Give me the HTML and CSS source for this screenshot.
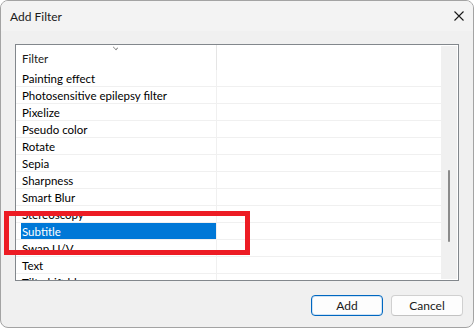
FILE: index.html
```html
<!DOCTYPE html>
<html>
  <head>
    <meta charset="utf-8">
    <title>Add Filter</title>
    <link rel="stylesheet" href="styles.css">
  </head>
  <body>
    <section class="dialog">
      <header class="titlebar">
        <h1>Add Filter</h1>
        <span class="close">
          <svg width="10" height="10" viewBox="0 0 10 10"><path d="M0.5 0.5 L9.5 9.5 M9.5 0.5 L0.5 9.5" stroke="#1a1a1a" stroke-width="1.1" fill="none"/></svg>
        </span>
      </header>
      <div class="content">
        <div class="listbox">
          <div class="list">
            <div class="list-head">
              <div class="col-name">Filter<span class="sort"></span></div>
              <div class="col-rest"></div>
            </div>
            <ul class="rows">
              <li><span class="cell">Painting effect</span></li>
              <li><span class="cell">Photosensitive epilepsy filter</span></li>
              <li><span class="cell">Pixelize</span></li>
              <li><span class="cell">Pseudo color</span></li>
              <li><span class="cell">Rotate</span></li>
              <li><span class="cell">Sepia</span></li>
              <li><span class="cell">Sharpness</span></li>
              <li><span class="cell">Smart Blur</span></li>
              <li><span class="cell">Stereoscopy</span></li>
              <li class="selected"><span class="cell">Subtitle</span></li>
              <li><span class="cell">Swap U/V</span></li>
              <li><span class="cell">Text</span></li>
              <li class="partial"><span class="cell">Tilt-shift blur</span></li>
            </ul>
          </div>
          <div class="scrollbar"><span class="thumb"></span></div>
        </div>
        <div class="buttons">
          <button class="btn default">Add</button>
          <button class="btn">Cancel</button>
        </div>
      </div>
      <!-- highlight drawn over the list -->
      <div class="marker"></div>
    </section>
  </body>
</html>
```

FILE: styles.css
```css
html {
  background: #fff;
  color: #000;
}
html, button {
  font-family: Lato, "Noto Sans", "Liberation Sans", sans-serif;
}
body {
  margin: 0;
}

.dialog {
  position: relative;
  width: 472px;
  height: 326px;
  border: 1px solid #a3a3a3;
  border-radius: 8px;
  background: #f0f0f0;
  display: flex;
  flex-direction: column;
  overflow: hidden;
}

.titlebar {
  height: 30px;
  background: #f3f3f3;
  display: flex;
  align-items: center;
  justify-content: space-between;
  padding: 0 9px 0 9px;
}
.titlebar h1 {
  margin: 0;
  font-size: 12px;
  font-weight: normal;
  color: #1a1a1a;
}
.titlebar .close {
  display: block;
  width: 10px;
  height: 10px;
  margin-top: -1px;
}
.titlebar .close svg {
  display: block;
}

.content {
  padding: 13px 14px 0 14px;
}

.listbox {
  height: 235px;
  border: 1px solid #82878c;
  background: #fff;
  display: flex;
}

.list {
  width: 425px;
  overflow: hidden;
  font-size: 11.5px;
}

.list-head {
  height: 25px;
  display: flex;
}
.list-head .col-name {
  position: relative;
  width: 194px;
  padding-left: 6px;
  line-height: 27px;
  border-right: 1px solid #e5e5e5;
  color: #1a1a1a;
}
/* little sort chevron on top of the header */
.list-head .sort {
  position: absolute;
  left: 97px;
  top: 0;
  width: 4px;
  height: 4px;
  border-right: 1px solid #7a7a7a;
  border-bottom: 1px solid #7a7a7a;
  transform: rotate(45deg) scale(0.9, 0.6);
}

.rows {
  margin: 0;
  padding: 0;
  list-style: none;
}
.rows li {
  height: 16px;
  border-bottom: 1px solid #f0f0f0;
  display: flex;
}
.rows li:after {
  content: "";
  display: block;
  border-left: 1px solid #f0f0f0;
}
.rows .cell {
  display: block;
  width: 194px;
  margin-left: 5px;
  padding-left: 1px;
  line-height: 18px;
  white-space: nowrap;
  overflow: hidden;
  color: #000;
}
.rows li.selected .cell {
  background: #0078d7;
  color: #fff;
}

.scrollbar {
  position: relative;
  width: 16px;
  margin: 1px 1px 1px 0;
  background: #f0f0f0;
}
.scrollbar .thumb {
  position: absolute;
  left: 7px;
  top: 124px;
  width: 2px;
  height: 72px;
  border-radius: 1px;
  background: #8a8a8a;
}

.buttons {
  display: flex;
  justify-content: flex-end;
  gap: 8px;
  margin-top: 14px;
  margin-right: -4px;
}
.btn {
  width: 72px;
  height: 21px;
  padding: 0;
  font-size: 12px;
  color: #1a1a1a;
  background: #fdfdfd;
  border: 1px solid #d0d0d0;
  border-bottom-color: #c2c2c2;
  border-radius: 4px;
}
.btn.default {
  border: 1px solid #0067c0;
  box-shadow: inset 0 0 0 1px #cfe3f5;
}

.marker {
  position: absolute;
  left: 3px;
  top: 210px;
  width: 236px;
  height: 34px;
  border: 5px solid #ed1c24;
}
```
